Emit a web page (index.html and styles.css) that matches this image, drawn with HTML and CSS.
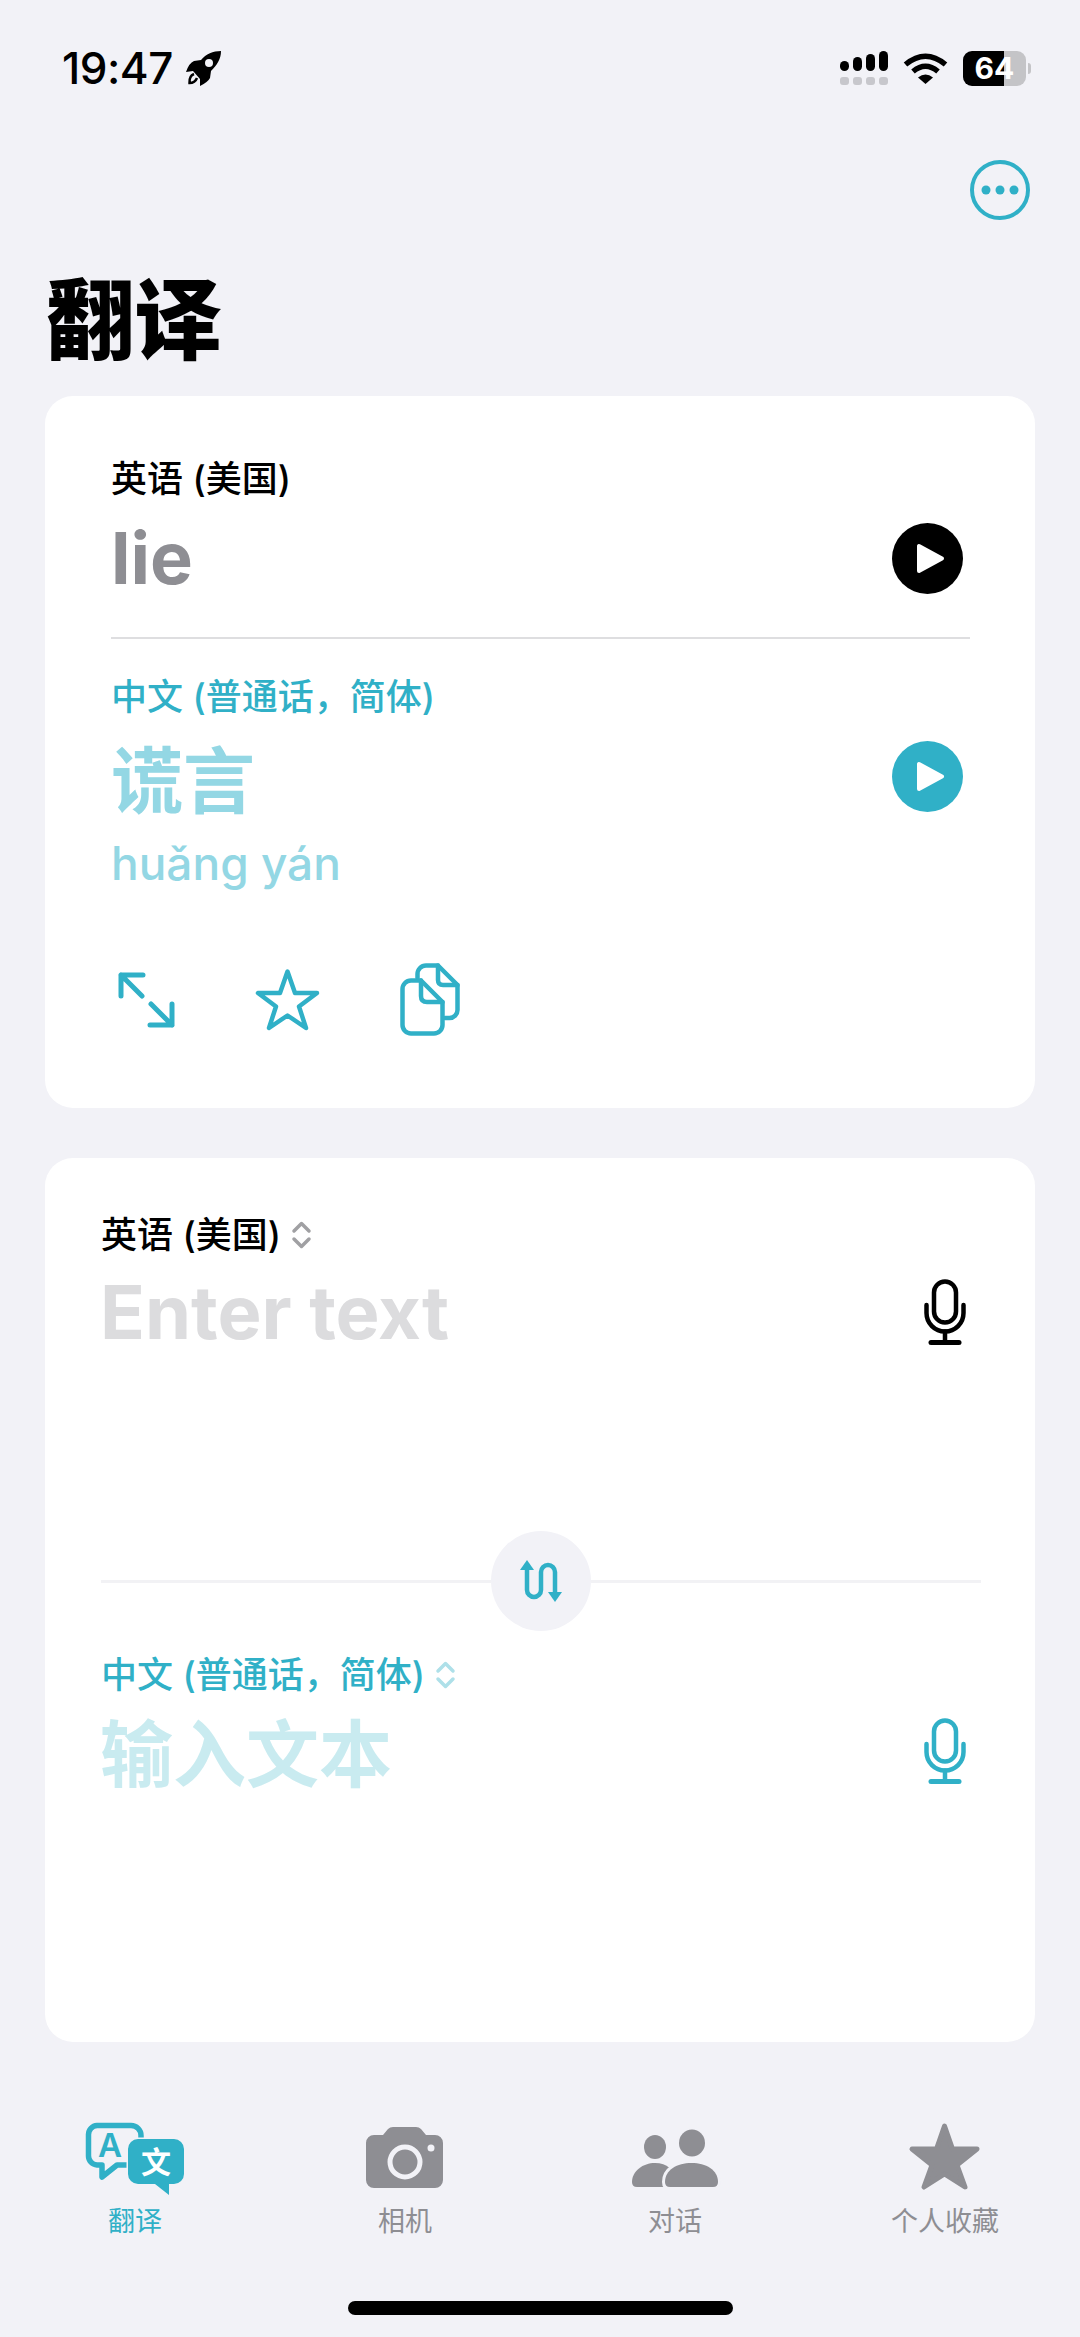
FILE: index.html
```html
<!DOCTYPE html>
<html lang="zh-Hans">
<head>
    <meta charset="UTF-8">
    <meta name="viewport" content="width=device-width, initial-scale=1.0">
    <title>翻译</title>
    <link rel="stylesheet" href="styles.css">
</head>

<body>
    <div class="status-bar">
        <div class="status-left">
            <span class="time">19:47</span>
            <svg class="rocket" width="36" height="36" viewBox="0 0 36 36">
                <path d="M35 1C27 1 20 4 15 10L8 11Q3 13 0 22L7 21L14 29L14 36Q22 32 24 28L25 21C31 15 35 9 35 1Z"/>
                <circle cx="23" cy="13" r="4" fill="#f2f2f7"/>
                <path d="M8 24Q3 26 3.500 33Q9 33 11 28" fill="none" stroke="#000" stroke-width="2.500"/>
            </svg>
        </div>
        <div class="status-right">
            <svg width="48" height="34" viewBox="0 0 48 34">
                <rect x="0" y="10" width="9" height="10" rx="4.500"/>
                <rect x="13" y="6" width="9" height="14" rx="4.500"/>
                <rect x="26" y="3" width="9" height="17" rx="4.500"/>
                <rect x="39" y="0" width="9" height="20" rx="4.500"/>
                <g fill="#c7c7cc">
                    <rect x="0" y="26" width="9" height="8" rx="3"/>
                    <rect x="13" y="26" width="9" height="8" rx="3"/>
                    <rect x="26" y="26" width="9" height="8" rx="3"/>
                    <rect x="39" y="26" width="9" height="8" rx="3"/>
                </g>
            </svg>
            <svg class="wifi" width="45" height="31" viewBox="0 0 45 31">
                <path d="M2.500 11.500Q22.500 -5 42.500 11.500" fill="none" stroke="#000" stroke-width="5.500"/>
                <path d="M10 18.500Q22.500 8 35 18.500" fill="none" stroke="#000" stroke-width="5.500"/>
                <path d="M15 24.500Q22.500 18.500 30 24.500L22.500 31Z"/>
            </svg>
            <div class="battery">64</div>
        </div>
    </div>

    <div class="top-action">
        <svg width="60" height="60" viewBox="0 0 60 60">
            <circle cx="30" cy="30" r="28" fill="none" stroke="#30b0c7" stroke-width="4"/>
            <circle cx="16" cy="30" r="4.500" fill="#30b0c7"/>
            <circle cx="30" cy="30" r="4.500" fill="#30b0c7"/>
            <circle cx="44" cy="30" r="4.500" fill="#30b0c7"/>
        </svg>
    </div>

    <h1 class="page-title">翻译</h1>

    <section class="card result-card">
        <div class="lang-label">英语 (美国)</div>
        <div class="result-row first-row">
            <span class="source-word">lie</span>
            <svg width="71" height="71" viewBox="0 0 71 71">
                <circle cx="35.500" cy="35.500" r="35.500" fill="#000"/>
                <path d="M27 23V48L50 35.500Z" fill="#fff" stroke="#fff" stroke-width="4" stroke-linejoin="round"/>
            </svg>
        </div>
        <div class="divider"></div>
        <div class="lang-label teal label-after-divider">中文 (普通话，简体)</div>
        <div class="result-row second-row">
            <span class="target-word">谎言</span>
            <svg width="71" height="71" viewBox="0 0 71 71">
                <circle cx="35.500" cy="35.500" r="35.500" fill="#30b0c7"/>
                <path d="M27 23V48L50 35.500Z" fill="#fff" stroke="#fff" stroke-width="4" stroke-linejoin="round"/>
            </svg>
        </div>
        <div class="pinyin">huǎng yán</div>
        <div class="result-actions">
            <svg width="57" height="56" viewBox="0 0 57 56" fill="none" stroke="#30b0c7" stroke-width="5" stroke-linecap="round" stroke-linejoin="round">
                <path d="M25 3H3V24M3 3L24 24"/>
                <path d="M32 53H54V32M54 53L33 32"/>
            </svg>
            <svg width="65" height="62" viewBox="0 0 65 62" fill="none" stroke="#30b0c7" stroke-width="4.500" stroke-linejoin="round">
                <path d="M32.500 2.500L40 24H62L44 37.500L51 59L32.500 46.500L14 59L21 37.500L3 24H25Z"/>
            </svg>
            <svg width="60" height="73" viewBox="0 0 60 73" fill="none" stroke="#30b0c7" stroke-width="4.500" stroke-linecap="round" stroke-linejoin="round">
                <path d="M17.500 15V11A8.500 8.500 0 0 1 26 2.500H38L57.500 22V47A8 8 0 0 1 49.500 55H45"/>
                <path d="M38 2.500V17Q38 22 43 22H57.500"/>
                <path d="M21 17.500H11A8.500 8.500 0 0 0 2.500 26V62A8.500 8.500 0 0 0 11 70.500H34A8.500 8.500 0 0 0 42.500 62V39Z"/>
                <path d="M21 17.500V33Q21 39 27 39H42.500"/>
            </svg>
        </div>
    </section>

    <section class="card input-card">
        <div class="lang-label picker">
            英语 (美国)
            <svg width="21" height="28" viewBox="0 0 21 28" fill="none" stroke="#a0a0a3" stroke-width="3.500" stroke-linecap="round" stroke-linejoin="round">
                <path d="M3 10L10.500 2.500L18 10"/>
                <path d="M3 18L10.500 25.500L18 18"/>
            </svg>
        </div>
        <div class="input-row first-input">
            <span class="placeholder">Enter text</span>
            <svg width="42" height="66" viewBox="0 0 42 66" fill="none" stroke="#000" stroke-width="4.500" stroke-linecap="round">
                <rect x="10" y="2.500" width="22" height="41" rx="11"/>
                <path d="M2.500 26V34A18.500 18.500 0 0 0 39.500 34V26"/>
                <path d="M21 52.500V63"/>
                <path d="M7 63.500H35" stroke-width="5"/>
            </svg>
        </div>
        <div class="swap-row">
            <div class="swap-line"></div>
            <div class="swap-button">
                <svg width="46" height="42" viewBox="0 0 46 42">
                    <path d="M9 8V30A7 7 0 0 0 23 30V12A7 7 0 0 1 37 12V34" fill="none" stroke="#30b0c7" stroke-width="4.500"/>
                    <path d="M9 0L16 10H2Z" fill="#30b0c7"/>
                    <path d="M37 42L44 32H30Z" fill="#30b0c7"/>
                </svg>
            </div>
            <div class="swap-line"></div>
        </div>
        <div class="lang-label teal picker second-picker">
            中文 (普通话，简体)
            <svg width="21" height="28" viewBox="0 0 21 28" fill="none" stroke="#aee0e9" stroke-width="3.500" stroke-linecap="round" stroke-linejoin="round">
                <path d="M3 10L10.500 2.500L18 10"/>
                <path d="M3 18L10.500 25.500L18 18"/>
            </svg>
        </div>
        <div class="input-row second-input">
            <span class="placeholder teal-placeholder">输入文本</span>
            <svg width="42" height="66" viewBox="0 0 42 66" fill="none" stroke="#30b0c7" stroke-width="4.500" stroke-linecap="round">
                <rect x="10" y="2.500" width="22" height="41" rx="11"/>
                <path d="M2.500 26V34A18.500 18.500 0 0 0 39.500 34V26"/>
                <path d="M21 52.500V63"/>
                <path d="M7 63.500H35" stroke-width="5"/>
            </svg>
        </div>
    </section>

    <nav class="tab-bar">
        <div class="tab active">
            <svg width="100" height="76" viewBox="0 0 100 76">
                <path d="M12 5.500H46A10 10 0 0 1 56 15.500V35A10 10 0 0 1 46 45H32L17 57V45H12A9 9 0 0 1 3.500 36V14.500A9 9 0 0 1 12 5.500Z" fill="none" stroke="#30b0c7" stroke-width="5.500" stroke-linejoin="round"/>
                <text class="icon-letter" x="25" y="37" text-anchor="middle">A</text>
                <path d="M53 19H89A10 10 0 0 1 99 29V54A10 10 0 0 1 89 64H84V75L70 64H53A10 10 0 0 1 43 54V29A10 10 0 0 1 53 19Z" fill="#30b0c7" stroke="#f2f2f7" stroke-width="3" paint-order="stroke" stroke-linejoin="round"/>
                <text class="icon-hanzi" x="71" y="53" text-anchor="middle">文</text>
            </svg>
            <span>翻译</span>
        </div>
        <div class="tab">
            <svg width="100" height="76" viewBox="0 0 100 76">
                <path d="M19 15H28L33 9Q35 7 38 7H61Q64 7 66 9L71 15H80A8 8 0 0 1 88 23V60A8 8 0 0 1 80 68H19A8 8 0 0 1 11 60V23A8 8 0 0 1 19 15Z" fill="#8e8e93"/>
                <circle cx="50" cy="42" r="15" fill="none" stroke="#f2f2f7" stroke-width="5"/>
                <circle cx="76" cy="28" r="3.500" fill="#f2f2f7"/>
            </svg>
            <span>相机</span>
        </div>
        <div class="tab">
            <svg width="100" height="76" viewBox="0 0 100 76">
                <ellipse cx="30" cy="27" rx="11" ry="12" fill="#8e8e93"/>
                <ellipse cx="67" cy="23" rx="13" ry="13.500" fill="#8e8e93"/>
                <path d="M7 62C7 51 18 43 30 43C42 43 50 50 50 62V67H12Q7 67 7 62Z" fill="#8e8e93"/>
                <path d="M40 62C40 50 52 43 66.500 43C81 43 93 50 93 62Q93 67 88 67H45Q40 67 40 62Z" fill="#8e8e93" stroke="#f2f2f7" stroke-width="6" paint-order="stroke"/>
            </svg>
            <span>对话</span>
        </div>
        <div class="tab">
            <svg width="100" height="76" viewBox="0 0 100 76">
                <path d="M49.500 6L57.500 29H82L62 45L70 67L49.500 54L29 67L37 45L17 29H41.500Z" fill="#8e8e93" stroke="#8e8e93" stroke-width="5" stroke-linejoin="round"/>
            </svg>
            <span>个人收藏</span>
        </div>
    </nav>

    <div class="home-indicator"></div>
</body>

</html>
```

FILE: styles.css
```css
/* Basic reset */
* {
    margin: 0;
    padding: 0;
    box-sizing: border-box;
}

body {
    font-family: Inter, 'Noto Sans CJK SC', sans-serif;
    background-color: #f2f2f7;
    color: #000;
    width: 1080px;
    height: 2337px;
    overflow: hidden;
}

svg {
    display: block;
    flex-shrink: 0;
}

/* Status bar */
.status-bar {
    display: flex;
    justify-content: space-between;
    align-items: center;
    height: 136px;
    padding: 0 54px 0 62px;
}

.status-left {
    display: flex;
    align-items: center;
    gap: 13px;
}

.time {
    font-size: 44px;
    font-weight: 500;
    letter-spacing: -0.5px;
}

.status-right {
    display: flex;
    align-items: center;
    gap: 15px;
}

.battery {
    width: 63px;
    height: 35px;
    border-radius: 9px;
    background: linear-gradient(to right, #000 65%, #c4c4c7 65%);
    color: #fff;
    font-size: 30px;
    font-weight: 700;
    line-height: 35px;
    text-align: center;
    position: relative;
}

.battery::after {
    content: '';
    position: absolute;
    right: -5px;
    top: 12px;
    width: 3px;
    height: 11px;
    border-radius: 0 3px 3px 0;
    background-color: #c4c4c7;
}

/* Header */
.top-action {
    display: flex;
    justify-content: flex-end;
    margin-top: 24px;
    padding-right: 50px;
}

.page-title {
    font-size: 88px;
    font-weight: 900;
    line-height: 90px;
    margin: 55px 0 31px 46px;
}

/* Cards */
.card {
    background-color: #fff;
    border-radius: 28px;
    margin: 0 45px;
}

.result-card {
    height: 712px;
    padding: 61px 65px 0 66px;
    margin-bottom: 50px;
}

.input-card {
    height: 884px;
    padding: 55px 54px 0 56px;
}

.lang-label {
    font-size: 36px;
    font-weight: 500;
    line-height: 44px;
}

.teal {
    color: #30b0c7;
}

.result-row {
    display: flex;
    justify-content: space-between;
    align-items: center;
    height: 71px;
    padding-right: 7px;
}

.first-row {
    margin-top: 22px;
}

.source-word {
    font-size: 72px;
    font-weight: 700;
    color: #8e8e93;
    margin-top: -3px;
}

.divider {
    height: 2px;
    background-color: #dedee0;
    margin-top: 43px;
}

.label-after-divider {
    margin-top: 36px;
}

.second-row {
    margin-top: 22px;
}

.target-word {
    font-size: 72px;
    font-weight: 700;
    color: #93d7e4;
    margin-top: -3px;
}

.pinyin {
    font-size: 46px;
    font-weight: 500;
    line-height: 60px;
    color: #93d7e4;
    margin-top: 21px;
}

.result-actions {
    display: flex;
    align-items: center;
    gap: 80px;
    margin: 70px 0 0 7px;
}

/* Input card */
.picker {
    display: flex;
    align-items: center;
    gap: 10px;
}

.input-row {
    display: flex;
    justify-content: space-between;
    align-items: center;
    height: 80px;
    padding-right: 15px;
}

.first-input {
    margin-top: 15px;
}

.second-input {
    margin-top: 14px;
}

.placeholder {
    font-size: 74px;
    font-weight: 700;
    color: #dcdcde;
    margin-left: -1px;
}

.teal-placeholder {
    font-size: 73px;
    color: #c9ebf0;
    margin-top: -4px;
}

.swap-row {
    display: flex;
    align-items: center;
    margin-top: 179px;
}

.swap-line {
    flex: 1;
    height: 3px;
    background-color: #f2f2f5;
}

.swap-button {
    display: flex;
    justify-content: center;
    align-items: center;
    width: 100px;
    height: 100px;
    border-radius: 50%;
    background-color: #f2f2f7;
}

.second-picker {
    margin-top: 22px;
}

/* Bottom tabs */
.tab-bar {
    display: grid;
    grid-template-columns: repeat(4, 1fr);
    margin-top: 78px;
}

.tab {
    display: flex;
    flex-direction: column;
    align-items: center;
    gap: 8px;
    font-size: 27px;
    line-height: 36px;
    color: #8e8e93;
}

.tab.active {
    color: #30b0c7;
}

.icon-letter {
    font-size: 33px;
    font-weight: 600;
    fill: #30b0c7;
}

.icon-hanzi {
    font-size: 30px;
    font-weight: 700;
    fill: #fff;
}

.home-indicator {
    width: 385px;
    height: 14px;
    border-radius: 7px;
    background-color: #000;
    margin: 61px auto 0;
}
```
